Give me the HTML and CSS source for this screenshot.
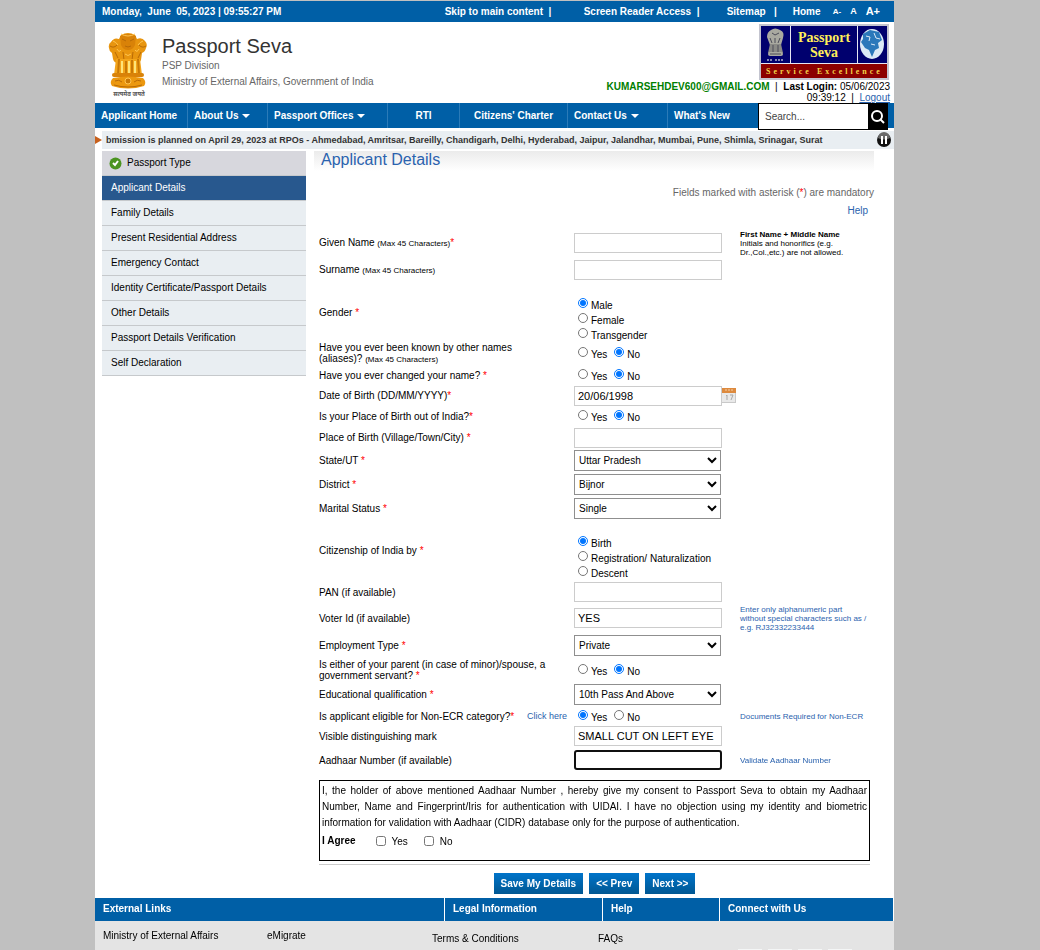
FILE: index.html
```html
<!DOCTYPE html>
<html lang="en">
<head>
<meta charset="utf-8">
<title>Passport Seva - Applicant Details</title>
<link rel="stylesheet" href="styles.css">
</head>
<body>
<div class="page">
  <div class="topbar">
    <div class="clock">Monday,&nbsp; June&nbsp; 05, 2023 | 09:55:27 PM</div>
    <div class="top-links">
      <span><a href="#main">Skip to main content</a>&nbsp; |</span>
      <span><a href="#">Screen Reader Access</a>&nbsp; |</span>
      <span><a href="#">Sitemap</a>&nbsp;&nbsp; |</span>
      <a href="#">Home</a>
    </div>
    <div class="text-size">
      <a class="ts-small" href="#">A-</a>
      <a class="ts-mid" href="#">A</a>
      <a class="ts-big" href="#">A+</a>
    </div>
  </div>

  <header class="header">
    <svg class="emblem" width="42" height="66" viewBox="0 0 42 66" role="img" aria-label="State emblem">
      <path d="M14 3q7-4 14 0l2 4q5-2 8 2 3 3 1 7-1 4-4 5l-1 7q-1 3-4 3H11q-4 0-5-4l-1-6q-3-2-3-5-1-4 2-6 3-5 8-3z" fill="#e8950f"/>
      <path d="M13 4q8-4 16 0l-1 9q-2 5-7 5t-7-5z" fill="#d98208"/>
      <path d="M3 14q4 3 8-2M39 14q-4 3-8-2M8 20l3 6M16 20l1 8M26 20l-1 8M34 20l-3 6M15 7l4 2M27 7l-4 2M18 14q3 2 6 0" fill="none" stroke="#b86a06" stroke-width="1"/>
      <path d="M14 2q7 4 14 0M6 9q3 1 5 4M36 9q-3 1-5 4M10 17q2 4 4 1M32 17q-2 4-4 1M18 22q3 3 6 0" fill="none" stroke="#ffc552" stroke-width="1"/>
      <path d="M9 27h24l2 16H7z" fill="#f3a51b"/>
      <path d="M12 27l-1 16M19 29v14M25 28v15M31 27l1 15" stroke="#c87806" stroke-width="2"/>
      <path d="M15 29v13M22 29v12M28 29v12" stroke="#ffe57a" stroke-width="2"/>
      <rect x="5" y="41" width="32" height="4" rx="2" fill="#d98208"/>
      <path d="M6 46q15-3 30 0 4 4 1 8-16 5-32 0-3-4 1-8z" fill="#ec980f"/>
      <ellipse cx="21" cy="49" rx="3" ry="3" fill="#c87806" stroke="#ffc552"/>
      <path d="M8 49q4-2 7 1M34 49q-4-2-7 1M7 53q14 4 28 0" fill="none" stroke="#b86a06"/>
      <text x="22" y="64" text-anchor="middle" class="motto">सत्यमेव जयते</text>
    </svg>
    <div class="brand">
      <h1>Passport Seva</h1>
      <p>PSP Division</p>
      <p>Ministry of External Affairs, Government of India</p>
    </div>
    <div class="account">
      <svg class="logo" width="130" height="56" viewBox="0 0 130 56" role="img" aria-label="Passport Seva, Service Excellence">
        <rect width="130" height="56" fill="#c3c4cf"/>
        <rect x="2" y="2" width="126" height="37" fill="#00006e"/>
        <path d="M31.500 2v37M98.500 2v37M2 39.500h126" stroke="#e6e6f2"/>
        <rect x="2" y="40" width="126" height="14" fill="#8c0000"/>
        <g fill="#a9a9a0">
          <path d="M12 6q4-3 9 0 5 2 3 8l-2 7H11L8 13q0-5 4-7z"/>
          <path d="M11 20h11l2 9H9z" fill="#8a8a86"/>
          <rect x="9" y="28" width="15" height="4" rx="2"/>
        </g>
        <path d="M13 9l3 2 4-2M11 14l2 5M16 14v5M21 14l-2 5M14 21v7M19 21v7M11 30h11" stroke="#4c4c58" fill="none"/>
        <path d="M8 36h6M16 36h8" stroke="#8585b5" stroke-width="2" stroke-dasharray="2 1"/>
        <text class="logo-name" x="65" y="18" text-anchor="middle">Passport</text>
        <text class="logo-name" x="65" y="33" text-anchor="middle">Seva</text>
        <ellipse cx="113" cy="20" rx="12" ry="15" fill="#dceaf6"/>
        <path d="M104 10l7-4 9 2 3 8-4 3 1 5-4 2-3 7-3-7-4-2-4-6 2-3z" fill="#2b78ba"/>
        <path d="M107 12l4 1-1 4M115 9l2 5 4 1M112 20l4 1" stroke="#dceaf6" fill="none"/>
        <text class="logo-tag" x="7" y="50">Service Excellence</text>
      </svg>
      <div class="login"><b class="mail">KUMARSEHDEV600@GMAIL.COM</b>&nbsp; |&nbsp; <b>Last Login:</b> 05/06/2023<br>09:39:12&nbsp; |&nbsp; <a href="#">Logout</a></div>
    </div>
  </header>

  <nav class="nav">
    <a href="#">Applicant Home</a>
    <a href="#">About Us <i class="caret"></i></a>
    <a href="#">Passport Offices <i class="caret"></i></a>
    <a class="mid" href="#">RTI</a>
    <a class="mid" href="#">Citizens' Charter</a>
    <a href="#">Contact Us <i class="caret"></i></a>
    <a href="#">What's New</a>
    <form class="search">
      <input type="text" placeholder="Search..." aria-label="Search">
      <button type="button" aria-label="Go">
        <svg width="16" height="16" viewBox="0 0 16 16" fill="none" stroke="#fff" stroke-width="2"><circle cx="7" cy="7" r="5"/><path d="M10 10l4 4"/></svg>
      </button>
    </form>
  </nav>

  <div class="ticker">
    <svg width="7" height="8" viewBox="0 0 7 8"><path d="M0 0l7 4-7 4z" fill="#c8601c"/></svg>
    <div class="ticker-text">bmission is planned on April 29, 2023 at RPOs - Ahmedabad, Amritsar, Bareilly, Chandigarh, Delhi, Hyderabad, Jaipur, Jalandhar, Mumbai, Pune, Shimla, Srinagar, Surat</div>
    <button type="button" aria-label="Pause">
      <svg width="16" height="16" viewBox="0 0 16 16"><circle cx="8" cy="8" r="7" fill="#111"/><path d="M2 6a6 6 0 0 1 12 0q-6 3-12 0z" fill="#6a6a6a"/><path d="M6 4v8M10 4v8" stroke="#fff" stroke-width="2"/></svg>
    </button>
  </div>

  <div class="body">
    <aside class="side">
      <a class="done" href="#"><svg width="13" height="13" viewBox="0 0 13 13"><circle cx="6.500" cy="6.500" r="6" fill="#4b9420"/><path d="M4 6l2 2 3-4" fill="none" stroke="#fff" stroke-width="2"/></svg>Passport Type</a>
      <a class="active" href="#">Applicant Details</a>
      <a href="#">Family Details</a>
      <a href="#">Present Residential Address</a>
      <a href="#">Emergency Contact</a>
      <a href="#">Identity Certificate/Passport Details</a>
      <a href="#">Other Details</a>
      <a href="#">Passport Details Verification</a>
      <a href="#">Self Declaration</a>
    </aside>

    <main class="main" id="main">
      <h2>Applicant Details</h2>
      <p class="mandatory">Fields marked with asterisk (<em>*</em>) are mandatory</p>
      <p class="help"><a href="#">Help</a></p>

      <form>
        <div class="fields">
          <div class="row h28">
            <label for="given">Given Name <small>(Max 45 Characters)</small><em>*</em></label>
            <div class="ctl"><input class="box" id="given" type="text"></div>
            <div class="note dark"><b>First Name + Middle Name</b><br>Initials and honorifics (e.g. Dr.,Col.,etc.) are not allowed.</div>
          </div>
          <div class="row h26">
            <label for="surname">Surname <small>(Max 45 Characters)</small></label>
            <div class="ctl"><input class="box" id="surname" type="text"></div>
          </div>
          <div class="row h58" role="radiogroup" aria-labelledby="l-gender">
            <span id="l-gender">Gender <em>*</em></span>
            <div class="stack">
              <label><input type="radio" name="gender" checked>Male</label>
              <label><input type="radio" name="gender">Female</label>
              <label><input type="radio" name="gender">Transgender</label>
            </div>
          </div>
          <div class="row h24" role="radiogroup" aria-labelledby="l-alias">
            <span id="l-alias">Have you ever been known by other names<br>(aliases)? <small>(Max 45 Characters)</small></span>
            <div class="ctl opts"><label><input type="radio" name="alias">Yes</label><label><input type="radio" name="alias" checked>No</label></div>
          </div>
          <div class="row h20" role="radiogroup" aria-labelledby="l-changed">
            <span id="l-changed">Have you ever changed your name? <em>*</em></span>
            <div class="ctl opts"><label><input type="radio" name="changed">Yes</label><label><input type="radio" name="changed" checked>No</label></div>
          </div>
          <div class="row h21">
            <label for="dob">Date of Birth (DD/MM/YYYY)<em>*</em></label>
            <div class="ctl"><input class="box" id="dob" type="text" value="20/06/1998">
              <button class="cal" type="button" aria-label="Pick a date"><svg width="14" height="15" viewBox="0 0 14 15"><rect width="14" height="15" fill="#e9e9e9"/><rect width="14" height="5" fill="#dd8a3e"/><path d="M3 2h8" stroke="#f5cfa6" stroke-dasharray="2 1"/><path d="M4 8l1-1v5M8 7h3l-2 5" fill="none" stroke="#a9a9a9"/><path d="M0 14.500h14M13.500 5v10" stroke="#c9c9c9"/></svg></button>
            </div>
          </div>
          <div class="row h21" role="radiogroup" aria-labelledby="l-out">
            <span id="l-out">Is your Place of Birth out of India?<em>*</em></span>
            <div class="ctl opts"><label><input type="radio" name="out">Yes</label><label><input type="radio" name="out" checked>No</label></div>
          </div>
          <div class="row h21">
            <label for="place">Place of Birth (Village/Town/City) <em>*</em></label>
            <div class="ctl"><input class="box" id="place" type="text"></div>
          </div>
          <div class="row h24">
            <label for="state">State/UT <em>*</em></label>
            <div class="ctl"><select id="state"><option>Uttar Pradesh</option></select></div>
          </div>
          <div class="row h24">
            <label for="district">District <em>*</em></label>
            <div class="ctl"><select id="district"><option>Bijnor</option></select></div>
          </div>
          <div class="row h24">
            <label for="marital">Marital Status <em>*</em></label>
            <div class="ctl"><select id="marital"><option>Single</option></select></div>
          </div>
          <div class="row h60" role="radiogroup" aria-labelledby="l-cit">
            <span id="l-cit">Citizenship of India by <em>*</em></span>
            <div class="stack">
              <label><input type="radio" name="cit" checked>Birth</label>
              <label><input type="radio" name="cit">Registration/ Naturalization</label>
              <label><input type="radio" name="cit">Descent</label>
            </div>
          </div>
          <div class="row h24">
            <label for="pan">PAN (if available)</label>
            <div class="ctl"><input class="box" id="pan" type="text"></div>
          </div>
          <div class="row h28">
            <label for="voter">Voter Id (if available)</label>
            <div class="ctl"><input class="box" id="voter" type="text" value="YES"></div>
            <div class="note">Enter only alphanumeric part without special characters such as / e.g. RJ32332233444</div>
          </div>
          <div class="row h26">
            <label for="emp">Employment Type <em>*</em></label>
            <div class="ctl"><select id="emp"><option>Private</option></select></div>
          </div>
          <div class="row h24" role="radiogroup" aria-labelledby="l-gov">
            <span id="l-gov">Is either of your parent (in case of minor)/spouse, a<br>government servant? <em>*</em></span>
            <div class="ctl opts"><label><input type="radio" name="gov">Yes</label><label><input type="radio" name="gov" checked>No</label></div>
          </div>
          <div class="row h24">
            <label for="edu">Educational qualification <em>*</em></label>
            <div class="ctl"><select id="edu"><option>10th Pass And Above</option></select></div>
          </div>
          <div class="row h20" role="radiogroup" aria-labelledby="l-ecr">
            <span class="split"><span id="l-ecr">Is applicant eligible for Non-ECR category?<em>*</em></span><a href="#">Click here</a></span>
            <div class="ctl opts"><label><input type="radio" name="ecr" checked>Yes</label><label><input type="radio" name="ecr">No</label></div>
            <div class="note"><a href="#">Documents Required for Non-ECR</a></div>
          </div>
          <div class="row h20">
            <label for="mark">Visible distinguishing mark</label>
            <div class="ctl"><input class="box" id="mark" type="text" value="SMALL CUT ON LEFT EYE"></div>
          </div>
          <div class="row h28">
            <label for="aadhaar">Aadhaar Number (if available)</label>
            <div class="ctl"><input class="box" id="aadhaar" type="text" autofocus></div>
            <div class="note"><a href="#">Validate Aadhaar Number</a></div>
          </div>
        </div>

        <div class="consent">
          <p>I, the holder of above mentioned Aadhaar Number , hereby give my consent to Passport Seva to obtain my Aadhaar Number, Name and Fingerprint/Iris for authentication with UIDAI. I have no objection using my identity and biometric information for validation with Aadhaar (CIDR) database only for the purpose of authentication.</p>
          <div class="agree">
            <b>I Agree</b>
            <label><input type="checkbox">Yes</label>
            <label><input type="checkbox">No</label>
          </div>
        </div>
        <hr>
        <div class="buttons">
          <button type="button">Save My Details</button>
          <button type="button">&lt;&lt; Prev</button>
          <button type="button">Next &gt;&gt;</button>
        </div>
      </form>
    </main>
  </div>

  <footer class="footer">
    <div class="foot-heads"><b>External Links</b><b>Legal Information</b><b>Help</b><b>Connect with Us</b></div>
    <div class="foot-links">
      <a href="#">Ministry of External Affairs</a>
      <a href="#">eMigrate</a>
      <a class="low" href="#">Terms &amp; Conditions</a>
      <a class="low" href="#">FAQs</a>
      <div class="social"><i></i><i></i><i></i><i></i></div>
    </div>
  </footer>
</div>
</body>
</html>
```
FILE: styles.css
```css
* { box-sizing: border-box; }
html { height: 100%; background: #c0c0c0; }
body {
  height: 100%;
  margin: 0;
  overflow-y: auto;
  scrollbar-width: none;
  font: 10px/11px "Liberation Sans", Arial, sans-serif;
  color: #000;
}
h1, h2, p { margin: 0; font-weight: normal; }
a { color: #2a62ae; text-decoration: none; }
em { color: #f00; font-style: normal; }
small { font-size: 8px; }
input, select, button { font-family: inherit; margin: 0; }
svg { display: block; flex: none; }

.page { margin: 1px 146px 0 95px; background: #fff; min-height: 100%; }

.topbar {
  display: flex;
  align-items: center;
  height: 21px;
  padding: 0 14px 0 7px;
  background: #005fa6;
  color: #fff;
  font-weight: bold;
}
.topbar a { color: #fff; }
.clock { flex: 1; }
.top-links { display: grid; grid-template-columns: 139px 143px 66px 40px; }
.text-size { display: flex; align-items: center; gap: 9px; }
.ts-small { font-size: 8px; }
.ts-mid { font-size: 9px; }
.ts-big { font-size: 11px; }

.header { display: flex; height: 81px; padding: 0 4px 0 12px; }
.emblem { margin-top: 10px; }
.motto { font: bold 6px "Noto Sans", sans-serif; fill: #555; }
.brand { flex: 1; padding: 13px 0 0 13px; color: #666; line-height: 16px; }
.brand h1 { font-size: 20px; line-height: 22px; color: #333; margin-bottom: 1px; }
.account { display: flex; flex-direction: column; align-items: flex-end; padding-top: 2px; }
.logo { margin-right: 1px; }
.logo-name { font: bold 14px "Liberation Serif", serif; fill: #ffef5a; }
.logo-tag { font: bold 8px "Liberation Serif", serif; fill: #f3d64a; letter-spacing: 3px; }
.login { text-align: right; padding-top: 1px; }
.login .mail { color: #008000; }
.login a { text-decoration: underline; }

.nav {
  display: grid;
  grid-template-columns: 93px 80px 120px 72px 108px 100px 1fr 130px;
  height: 25px;
  padding-right: 6px;
  background: #005fa6;
}
.nav > a {
  padding-left: 6px;
  border-right: 1px solid #2b7bb8;
  color: #fff;
  font-weight: bold;
  line-height: 25px;
  margin-bottom: 2px;
}
.nav > a:nth-of-type(7) { border-right: 0; }
.nav > .mid { padding: 0; text-align: center; }
.caret {
  display: inline-block;
  margin-left: 1px;
  border: 4px solid transparent;
  border-top-color: #fff;
  border-bottom: 0;
  vertical-align: 1px;
}
.search { display: flex; border: 1px solid #000; background: #000; }
.search input { flex: 1; min-width: 0; border: 0; padding: 0 6px; font-size: 10px; background: #fff; }
.search input::placeholder { color: #444; }
.search button { width: 19px; padding: 0 0 0 2px; border: 0; background: #000; }

.ticker {
  display: flex;
  align-items: center;
  height: 18px;
  margin: 3px 0 2px;
  padding-right: 2px;
  background: linear-gradient(90deg, #fff 7px, #e9eef2 7px);
}
.ticker-text { flex: 1; margin: 0 10px 0 4px; overflow: hidden; white-space: nowrap; font-size: 9px; font-weight: bold; color: #333; }
.ticker button { padding: 0; border: 0; background: none; }

.body { display: flex; align-items: flex-start; padding: 0 20px 0 7px; }
.side { width: 204px; margin-right: 8px; }
.side a {
  display: flex;
  height: 25px;
  padding: 6px 9px;
  border-bottom: 1px solid #c6c9cc;
  background: #e9eef2;
  color: #000;
}
.side .done { background: #d7d7dd; padding-left: 7px; gap: 5px; }
.side .active { background: #28588e; color: #fff; }

.main { flex: 1; min-width: 0; }
.main h2 {
  height: 20px;
  padding-left: 7px;
  font-size: 16px;
  line-height: 18px;
  color: #2a62ae;
  background: linear-gradient(#ebebeb, #fff);
}
.mandatory { margin-top: 16px; text-align: right; color: #666; }
.help { margin: 7px 6px 13px; text-align: right; }
.main form { padding: 0 4px 0 5px; }
.row { display: grid; grid-template-columns: 255px 166px 1fr; align-items: center; }
.h20 { height: 20px; }
.h21 { height: 21px; }
.h24 { height: 24px; }
.h26 { height: 26px; }
.h28 { height: 28px; }
.h58 { height: 58px; }
.h60 { height: 60px; }
.ctl { display: flex; align-items: center; }
.box {
  width: 148px;
  height: 20px;
  padding: 0 3px;
  border: 1px solid #ccc;
  background: #fff;
  font-size: 11px;
}
.box:focus { border: 2px solid #101010; border-radius: 3px; outline: 0; padding: 0 2px; }
select {
  width: 147px;
  height: 21px;
  padding: 0;
  border: 1px solid #8f8f8f;
  border-radius: 0;
  background: #fff;
  color: #000;
  font-size: 10px;
}
.cal { padding: 0; border: 0; background: none; }
input[type="radio"], input[type="checkbox"] { width: 10px; height: 10px; flex: none; }
input[type="radio"] { margin-bottom: 3px; }
.opts { padding-left: 4px; gap: 7px; }
.opts label, .stack label { display: flex; align-items: flex-end; gap: 3px; }
.stack { padding: 13px 0 0 4px; }
.stack label { height: 15px; }
.split { display: flex; justify-content: space-between; padding-right: 7px; }
.split > a { font-size: 9px; }
.note { padding-right: 2px; font-size: 8px; line-height: 9px; color: #2a62ae; }
.dark { color: #000; padding-right: 20px; }

.consent { margin-top: 6px; padding: 2px 2px 11px; border: 1px solid #000; }
.consent p { line-height: 16px; text-align: justify; }
.agree { display: flex; align-items: center; gap: 20px; height: 18px; }
.agree label { display: flex; align-items: center; gap: 6px; padding-top: 2px; }
.agree label + label { margin-left: -4px; }
hr { height: 1px; margin: 3px 0 8px; border: 0; background: #ccc; }
.buttons { display: flex; justify-content: center; gap: 6px; padding-bottom: 4px; }
.buttons button {
  height: 21px;
  padding: 0 7px;
  border: 0;
  background: linear-gradient(#0074ca, #005792);
  color: #fff;
  font-size: 10px;
  font-weight: bold;
}

.footer { background: #e4e4e4; padding-bottom: 20px; }
.foot-heads {
  display: grid;
  grid-template-columns: 350px 158px 117px 1fr;
  height: 23px;
  background: #005fa6;
  color: #fff;
}
.foot-heads b { padding: 5px 8px; border-right: 1px solid #fff; }
.foot-links { display: grid; grid-template-columns: 164px 165px 166px 140px 1fr; padding: 9px 0 0 8px; }
.foot-links a { color: #000; }
.foot-links .low { padding-top: 3px; }
.social { display: flex; gap: 6px; padding-top: 19px; }
.social i { width: 24px; height: 24px; background: #f4f6f6; }
```
